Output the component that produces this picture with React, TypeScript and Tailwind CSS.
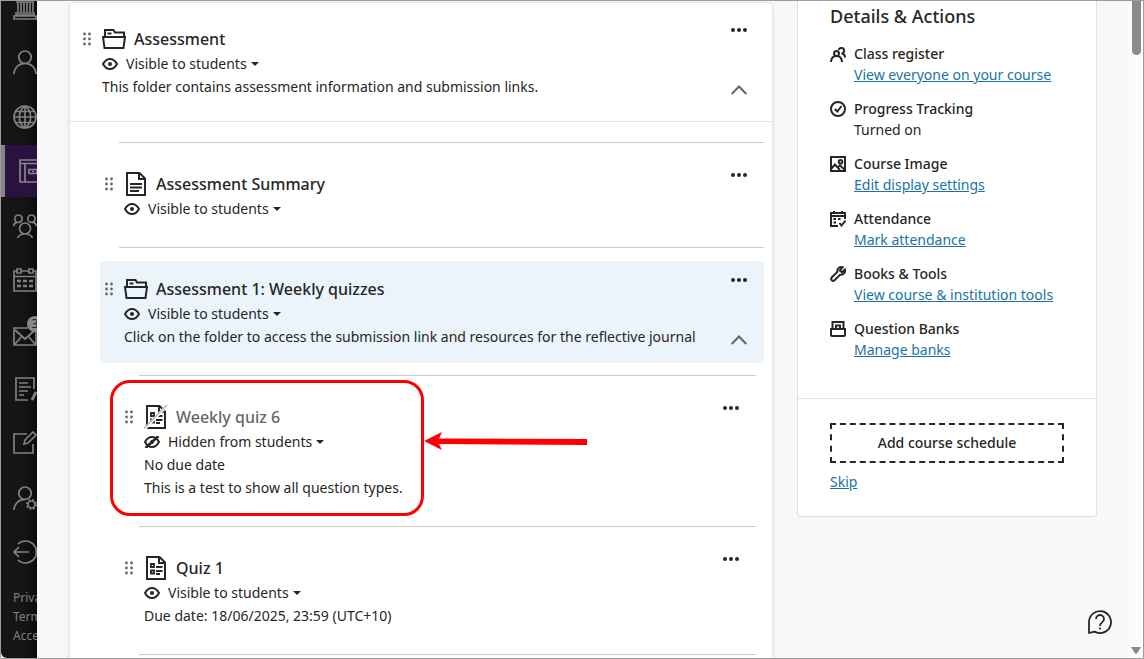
import type { ReactNode } from "react";

function Icon({ w = 24, h = 24, sw = 2, className = "", children }: { w?: number; h?: number; sw?: number; className?: string; children: ReactNode }) {
  return (
    <svg width={w} height={h} viewBox={`0 0 ${w} ${h}`} fill="none" stroke="currentColor" strokeWidth={sw} className={`shrink-0 ${className}`} aria-hidden="true">
      {children}
    </svg>
  );
}

const FolderIcon = () => (
  <Icon h={20}>
    <path d="M3 7V1h8.500l1.500 2.500h9V7M5.500 4.500h4M1 8h22l-1.500 11h-19z" />
  </Icon>
);

const DocIcon = () => (
  <Icon w={20}>
    <path d="M1 1h12.500L19 6.500V23H1z" />
    <path d="M13 1v6h6" />
    <path d="M4 12h12M4 15.500h12M4 19h9" />
  </Icon>
);

const QuizIcon = ({ hidden = false }: { hidden?: boolean }) => (
  <Icon w={hidden ? 24 : 20}>
    <g transform={hidden ? "translate(2 0)" : undefined}>
      <path d="M1 1h12.500L19 6.500V23H1z" />
      <path d="M13 1v6h6" />
      <path d="M5 8h3v3H5zM5 14.500h3v3H5zM10 11h6.500M10 15h6.500M10 18h4" strokeWidth="1.800" />
    </g>
    {hidden && (
      <>
        <path d="M1 23.500L23.500 0" stroke="#fff" strokeWidth="3" />
        <path d="M0 23.500L23 0" stroke="#b5b5b5" strokeWidth="1.500" />
      </>
    )}
  </Icon>
);

const EyeIcon = ({ off = false }: { off?: boolean }) => (
  <Icon w={16} h={12}>
    <path d="M1 6C3 2.500 5.300 1 8 1s5 1.500 7 5c-2 3.500-4.300 5-7 5S3 9.500 1 6z" />
    <circle cx="8" cy="6" r="2" fill="currentColor" stroke="none" />
    {off && <path d="M1.500 12L14.500 0" strokeWidth="2.600" />}
  </Icon>
);

const Grip = () => (
  <button type="button" aria-label="Reorder" className="flex h-[26px] items-center text-[#666]">
    <svg width="8" height="14" viewBox="0 0 8 14" fill="currentColor">
      {[2, 7, 12].map((y) => (
        <g key={y}>
          <circle cx="1.500" cy={y} r="1.400" />
          <circle cx="6.500" cy={y} r="1.400" />
        </g>
      ))}
    </svg>
  </button>
);

type ItemProps = {
  icon: ReactNode;
  title: string;
  lines?: string[];
  hidden?: boolean;
  folder?: boolean;
  className?: string;
};

function Item({ icon, title, lines = [], hidden = false, folder = false, className = "" }: ItemProps) {
  return (
    <div className={`flex items-stretch ${className}`}>
      <div className="mr-[11px]">
        <Grip />
      </div>
      <div className="min-w-0 flex-1">
        <h3 className={`flex h-[26px] items-center gap-2 text-base font-medium ${hidden ? "text-[#666]" : "text-[#262626]"}`}>
          <span className="flex w-6 justify-center text-[#262626]">{icon}</span>
          {title}
        </h3>
        <button type="button" className="flex h-[23px] items-center gap-2">
          <EyeIcon off={hidden} />
          <span className="flex items-center gap-1">
            {hidden ? "Hidden from students" : "Visible to students"}
            <svg width="8" height="4" viewBox="0 0 8 4" fill="currentColor" aria-hidden="true">
              <path d="M0 0h8L4 4z" />
            </svg>
          </span>
        </button>
        {lines.map((l) => (
          <p key={l} className="leading-[23px]">
            {l}
          </p>
        ))}
      </div>
      <div className="-mt-2 -mb-1 flex flex-col justify-between">
        <button type="button" aria-label="More options" className="flex h-6 w-6 items-center justify-center">
          <svg width="16" height="4" viewBox="0 0 16 4" fill="currentColor">
            <circle cx="2" cy="2" r="2" />
            <circle cx="8" cy="2" r="2" />
            <circle cx="14" cy="2" r="2" />
          </svg>
        </button>
        {folder && (
          <button type="button" aria-label="Collapse folder" className="flex h-6 w-6 items-center justify-center text-[#666]">
            <Icon w={16} h={10}>
              <path d="M.700 9L8 1.500 15.300 9" />
            </Icon>
          </button>
        )}
      </div>
    </div>
  );
}

const navItems: { name: string; active?: boolean; badge?: string; art: ReactNode }[] = [
  { name: "Institution", art: <path d="M1 0h22v3H1zM3 6h18M5 6v10M8 6v10M11 6v10M14 6v10M17 6v10M20 6v10M3 17h18v2H3zM1 20h22v3H1z" /> },
  { name: "Profile", art: <path d="M12 1a6.200 6.200 0 1 1 0 12.400A6.200 6.200 0 0 1 12 1zM.800 24c.4-6.500 5-10.600 11.200-10.600S22.800 17.500 23.200 24" /> },
  { name: "Activity", art: <path d="M12 1a11 11 0 1 1 0 22 11 11 0 0 1 0-22zM12 1v22M1 12h22M3 6.500h18M3 17.500h18M12 1C4.500 6 4.500 18 12 23M12 1c7.500 5 7.500 17 0 22" /> },
  { name: "Courses", active: true, art: <path d="M1 1h22v22H1zM1 4.500h22M6 4.500V23M10 10.500h8v4h-8zM13 12.500h2" /> },
  { name: "Organisations", art: <path d="M5.500 1a3.700 3.700 0 1 1 0 7.400 3.700 3.700 0 0 1 0-7.400zM18.500 1a3.700 3.700 0 1 1 0 7.400 3.700 3.700 0 0 1 0-7.400zM12 9a5.500 5.500 0 1 1 0 11 5.500 5.500 0 0 1 0-11zM.800 12c.2-2 1.200-3.300 3-3.700M23.200 12c-.2-2-1.200-3.300-3-3.700M4.500 24c1-2.500 3-4 7.500-4s6.500 1.500 7.500 4" /> },
  { name: "Calendar", art: <><path d="M4 3H1v20h22V3h-3M8 3h8M1 8.500h22M4 1h4v4H4zM16 1h4v4h-4z" /><path d="M4 13h4M10 13h4M16 13h4M4 18h4M10 18h4M16 18h4" strokeWidth="2.600" /></> },
  { name: "Messages", badge: "3", art: <path d="M15 6H1v17h22V10M2 8l10 9 10-9M2 22l7-8M22 22l-7-8" /> },
  { name: "Grades", art: <><path d="M15 23H3V1h18v11M6 6h9M6 10h12M6 14h9M6 18h5" /><path d="M19 23l4-8" strokeWidth="3" /></> },
  { name: "Assist", art: <path d="M14 3H1v19h19v-9M12 9l8-8 3 3-8 8-4 1z" /> },
  {
    name: "Tools",
    art: (
      <>
        <path d="M12 1a6.200 6.200 0 1 1 0 12.400A6.200 6.200 0 0 1 12 1zM.800 24c.4-6.500 5-10.600 11.200-10.600" />
        <circle cx="18.500" cy="18.500" r="3.500" />
        <circle cx="18.500" cy="18.500" r="4.700" strokeDasharray="1.850 1.850" />
      </>
    ),
  },
  { name: "Sign out", art: <path d="M5 4a11 11 0 1 1 0 16M16 12H1M6 7l-5 5 5 5" /> },
];

function Sidebar() {
  return (
    <aside className="flex w-9 shrink-0 flex-col overflow-hidden rounded-bl-md bg-linear-to-r from-[#151515] from-60% to-[#0b0b0b] text-[#808080]">
      <nav className="-mt-[19px] flex flex-1 flex-col justify-between">
        {navItems.map((n) => (
          <a
            key={n.name}
            href="#"
            aria-label={n.name}
            className={`flex h-[52px] items-center ${n.active ? "border-l-4 border-[#858585] bg-[#2a1140] pl-3.5 text-[#8a8590]" : "pl-3"}`}
          >
            <span className="relative">
              <Icon sw={1.7}>{n.art}</Icon>
              {n.badge && (
                <span className="absolute -top-1.5 left-3.5 flex h-4 w-4 items-center justify-center rounded-full bg-[#8a8888] text-xs text-[#222]">{n.badge}</span>
              )}
            </span>
          </a>
        ))}
      </nav>
      <div className="flex flex-col pt-2.5 pb-[13px] pl-3 text-xs leading-[19px]">
        <a href="#">Privacy</a>
        <a href="#">Terms</a>
        <a href="#">Accessibility</a>
      </div>
    </aside>
  );
}

const details: { title: string; text: string; plain?: boolean; art: ReactNode }[] = [
  {
    title: "Class register",
    text: "View everyone on your course",
    art: <path d="M6.500 5a2.500 2.500 0 1 1 0 5 2.500 2.500 0 0 1 0-5zM1 16c.2-3.800 2-6 5.500-6s5.300 2.200 5.500 6M8.800 4a2.700 2.700 0 1 1 3 3.300M11.500 7.300c2.200.300 3.300 1.700 3.700 4.200" />,
  },
  { title: "Progress Tracking", text: "Turned on", plain: true, art: <path d="M8 1a7 7 0 1 1 0 14A7 7 0 0 1 8 1zM4.800 8l2.500 2.500L11.500 5" /> },
  { title: "Course Image", text: "Edit display settings", art: <path d="M1 1h14v14H1zM1.500 12.500L5 8.500l5 5.500M8 11l2-1.500 4.500 4M10.500 4a1.800 1.800 0 1 1 0 3.600 1.800 1.800 0 0 1 0-3.600z" /> },
  { title: "Attendance", text: "Mark attendance", art: <path d="M8 15H1V2h14v6M1 5h14M4 0v3M12 0v3M3.500 8h2.500M3.500 11.500h2.500M8 8h2.500M9.500 12l2 2.500 4-5" /> },
  { title: "Books & Tools", text: "View course & institution tools", art: <path d="M12.500 1.300C10 .400 6.800 2.300 7.300 6L1.700 11.500c-1.600 2 1 4.500 2.800 2.800L10 8.700c3.500.500 5.700-2.500 4.800-5.200L12 6.200 9.800 4.500z" /> },
  { title: "Question Banks", text: "Manage banks", art: <path d="M2.500 8V1h11v7M6 8V4.500h4V8M1 8h14v6q0 1-1 1H2q-1 0-1-1z" /> },
];

function DetailsPanel() {
  return (
    <section className="w-[300px] shrink-0 self-start rounded-b border border-t-0 border-[#e0e0e0] bg-white">
      <div className="border-b border-[#e0e0e0] px-8 pb-[38px]">
        <h2 className="pt-px text-lg leading-7 font-medium">Details &amp; Actions</h2>
        <ul className="mt-[13px] flex flex-col gap-[13px] leading-[21px]">
          {details.map((d) => (
            <li key={d.title} className="flex gap-2">
              <Icon w={16} h={16} className="mt-[3px]">
                {d.art}
              </Icon>
              <div>
                <h3 className="font-medium">{d.title}</h3>
                {d.plain ? (
                  <p>{d.text}</p>
                ) : (
                  <a href="#" className="block text-[#1874a4] underline">
                    {d.text}
                  </a>
                )}
              </div>
            </li>
          ))}
        </ul>
      </div>
      <div className="px-8 pt-6 pb-6">
        <button type="button" className="h-10 w-full border-2 border-dashed border-[#262626] font-medium">
          Add course schedule
        </button>
        <a href="#" className="mt-2 inline-block leading-[21px] text-[#1874a4] underline">
          Skip
        </a>
      </div>
    </section>
  );
}

export default function App() {
  return (
    <div className="flex h-screen overflow-hidden border border-[#9c9c9c] bg-[#f8f8f8] font-['Noto_Sans','Open_Sans',sans-serif] text-sm text-[#262626]">
      <Sidebar />
      <main className="flex min-w-0 flex-1 gap-6 overflow-hidden px-8">
        <section className="mt-px min-w-0 flex-1 self-start rounded-t border border-[#e6e6e6] bg-white pb-10 shadow-md">
          <Item icon={<FolderIcon />} title="Assessment" folder lines={["This folder contains assessment information and submission links."]} className="border-b border-[#e0e0e0] py-[23px] pr-[21px] pl-[13px]" />
          <div className="mt-5 mr-2 ml-[30px]">
            <hr className="ml-[19px] border-[#ccc]" />
            <Item icon={<DocIcon />} title="Assessment Summary" className="pt-7 pr-[13px] pb-[27px] pl-[5px]" />
            <hr className="ml-[19px] border-[#ccc]" />
            <Item
              icon={<FolderIcon />}
              title="Assessment 1: Weekly quizzes"
              folder
              lines={["Click on the folder to access the submission link and resources for the reflective journal"]}
              className="mt-[13px] rounded-t bg-[#ebf3fb] py-[15px] pr-[13px] pl-[5px]"
            />
            <div className="mt-3 mr-2 ml-5">
              <hr className="ml-[19px] border-[#ccc]" />
              <div className="relative">
                <Item icon={<QuizIcon hidden />} title="Weekly quiz 6" hidden lines={["No due date", "This is a test to show all question types."]} className="pt-7 pr-[13px] pb-[27px] pl-[5px]" />
                <div className="pointer-events-none absolute top-1 -left-2.5 h-[136px] w-[314px] rounded-[20px] border-3 border-[#f00]" />
                <svg width="163" height="18" viewBox="0 0 163 18" className="pointer-events-none absolute top-14 left-[304px]" fill="#f00" aria-hidden="true">
                  <path d="M0 9L18 0l-3 6.500L163 7v6l-148-1 3 6z" />
                </svg>
              </div>
              <hr className="ml-[19px] border-[#ccc]" />
              <Item icon={<QuizIcon />} title="Quiz 1" lines={["Due date: 18/06/2025, 23:59 (UTC+10)"]} className="pt-7 pr-[13px] pb-[27px] pl-[5px]" />
              <hr className="ml-[19px] border-[#ccc]" />
            </div>
          </div>
        </section>
        <DetailsPanel />
      </main>
      <div className="flex w-3.5 shrink-0 flex-col items-center justify-between bg-[#fcfcfc] pb-1" aria-hidden="true">
        <div className="h-[54px] w-[9px] rounded-b-full bg-[#8b8b8b]" />
        <svg width="10" height="7" viewBox="0 0 10 7" fill="#8b8b8b">
          <path d="M0 0h10L6 6.500H4z" />
        </svg>
      </div>
      <button type="button" aria-label="Help" className="absolute right-8 bottom-[25px]">
        <Icon sw={1.8}>
          <path d="M1 23V12a11 11 0 1 1 5.500 9.600z" strokeLinejoin="round" />
          <path d="M8 9a4 4 0 1 1 6 3.500c-1.500.900-2 1.500-2 3.500M12 17.500v2" />
        </Icon>
      </button>
    </div>
  );
}
